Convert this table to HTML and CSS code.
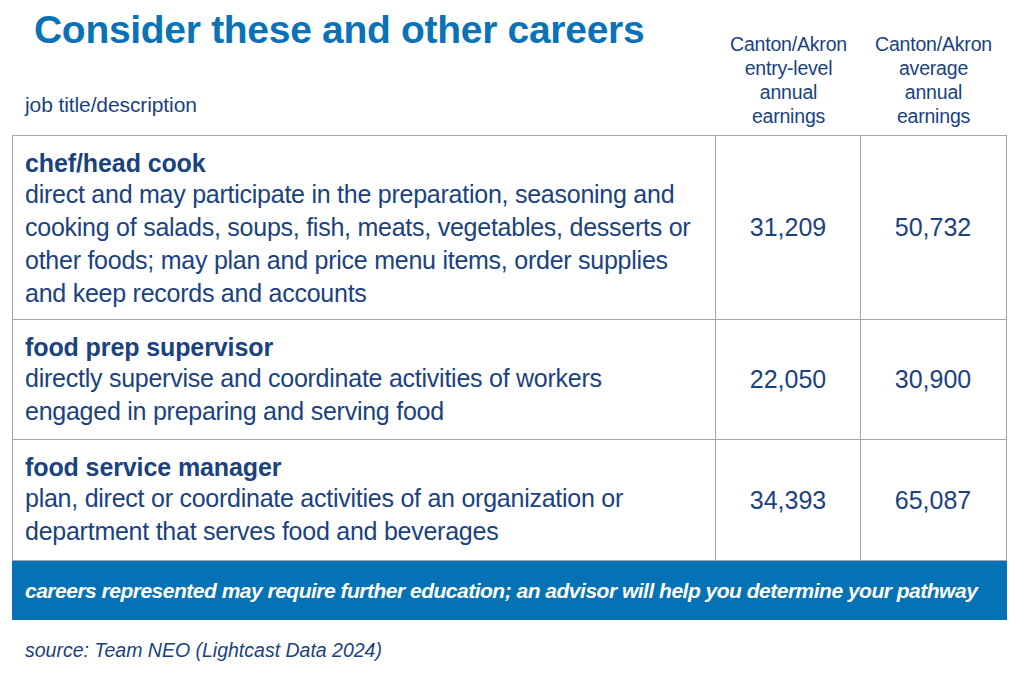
FILE: index.html
```html
<!DOCTYPE html>
<html>
<head>
<meta charset="utf-8">
<link rel="stylesheet" href="styles.css">
</head>
<body>
<div class="page">
  <div class="head">
    <div class="head-left">
      <h1 class="title">Consider these and other careers</h1>
      <div class="col-label">job title/description</div>
    </div>
    <div class="head-col">Canton/Akron<br>entry-level<br>annual<br>earnings</div>
    <div class="head-col">Canton/Akron<br>average<br>annual<br>earnings</div>
  </div>
  <div class="table">
    <div class="row r1">
      <div class="desc">
        <div class="job">chef/head cook</div>
        <div class="text">direct and may participate in the preparation, seasoning and<br>cooking of salads, soups, fish, meats, vegetables, desserts or<br>other foods; may plan and price menu items, order supplies<br>and keep records and accounts</div>
      </div>
      <div class="num">31,209</div>
      <div class="num">50,732</div>
    </div>
    <div class="row r2">
      <div class="desc">
        <div class="job">food prep supervisor</div>
        <div class="text">directly supervise and coordinate activities of workers<br>engaged in preparing and serving food</div>
      </div>
      <div class="num">22,050</div>
      <div class="num">30,900</div>
    </div>
    <div class="row r3">
      <div class="desc">
        <div class="job">food service manager</div>
        <div class="text">plan, direct or coordinate activities of an organization or<br>department that serves food and beverages</div>
      </div>
      <div class="num">34,393</div>
      <div class="num">65,087</div>
    </div>
  </div>
  <div class="band">careers represented may require further education; an advisor will help you determine your pathway</div>
  <div class="source">source: Team NEO (Lightcast Data 2024)</div>
</div>
</body>
</html>
```
FILE: styles.css
```css
html, body {
  margin: 0;
  padding: 0;
  background: #ffffff;
}
body {
  font-family: "Liberation Sans", Arial, sans-serif;
  color: #1a4280;
}
.page {
  width: 995px;
  padding: 0 0 0 12px;
}
.head {
  display: flex;
  height: 135px;
}
.head-left {
  width: 704px;
  display: flex;
  flex-direction: column;
}
.title {
  margin: 7px 0 0 22px;
  font-weight: bold;
  font-size: 39px;
  line-height: 46px;
  color: #0a72b5;
  letter-spacing: -0.3px;
  white-space: nowrap;
}
.col-label {
  margin: 40px 0 0 13px;
  font-size: 21px;
  line-height: 24px;
  letter-spacing: -0.1px;
}
.head-col {
  width: 145px;
  text-align: center;
  font-size: 19.5px;
  line-height: 24px;
  padding-top: 32px;
  letter-spacing: -0.2px;
}
.table {
  border: 1px solid #a3a6aa;
  border-bottom: none;
}
.row {
  display: flex;
  border-bottom: 1px solid #a3a6aa;
}
.r1 { height: 183px; }
.r2 { height: 119px; }
.r3 { height: 120px; }
.desc {
  width: 690px;
  padding: 12px 0 0 12px;
  font-size: 25px;
  line-height: 33px;
  letter-spacing: -0.25px;
  white-space: nowrap;
}
.job {
  font-weight: bold;
  font-size: 25px;
  line-height: 30px;
  letter-spacing: -0.1px;
}
.num {
  width: 144px;
  border-left: 1px solid #a3a6aa;
  display: flex;
  align-items: center;
  justify-content: center;
  font-size: 25px;
}
.band {
  background: #0572b6;
  color: #ffffff;
  height: 59px;
  line-height: 60px;
  font-style: italic;
  font-weight: bold;
  font-size: 21px;
  letter-spacing: -0.5px;
  padding-left: 13px;
  white-space: nowrap;
  overflow: hidden;
}
.source {
  margin: 17px 0 0 13px;
  font-style: italic;
  font-size: 19.5px;
  line-height: 26px;
  letter-spacing: 0;
}
```
